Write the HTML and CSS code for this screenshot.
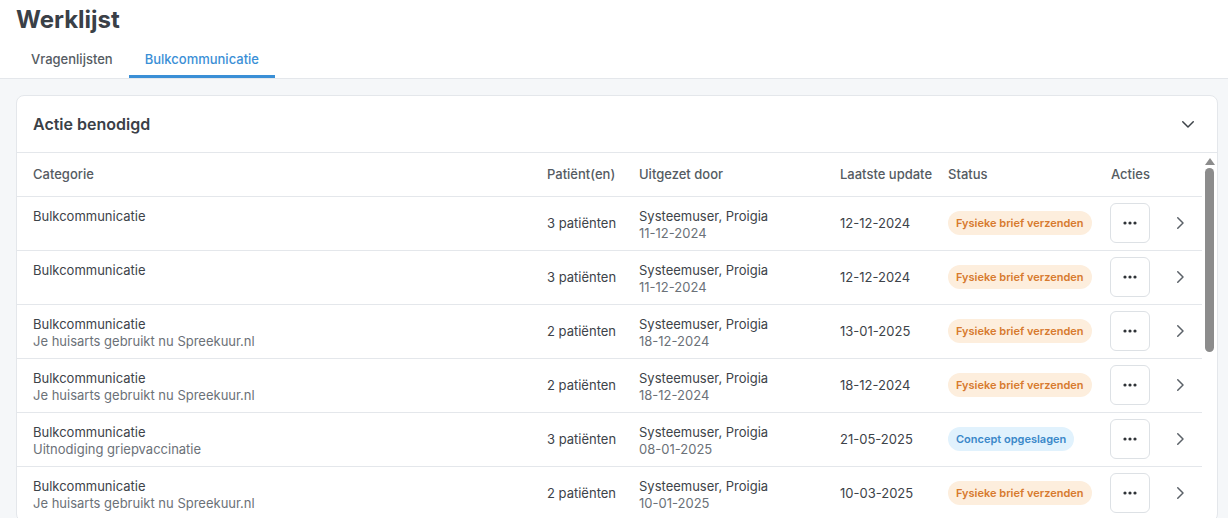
FILE: index.html
```html
<!DOCTYPE html>
<html>
<head>
  <meta charset="UTF-8">
  <title>Werklijst</title>
  <link rel="stylesheet" href="styles.css">
</head>
<body>
  <header class="page-head">
    <h1>Werklijst</h1>
    <nav class="tabs">
      <a class="tab">Vragenlijsten</a>
      <a class="tab active">Bulkcommunicatie</a>
    </nav>
  </header>

  <main class="content">
    <section class="card">
      <div class="card-head">
        <h2>Actie benodigd</h2>
        <svg class="toggle" width="18" height="18" viewBox="0 0 24 24" fill="none" stroke="#3d4349" stroke-width="2" stroke-linecap="round" stroke-linejoin="round"><path d="M5 9l7 7 7-7"/></svg>
      </div>
      <div class="card-body">
        <table class="list">
          <colgroup>
            <col style="width:514px"><col style="width:92px"><col style="width:201px"><col style="width:108px"><col style="width:163px"><col style="width:65px"><col style="width:42px">
          </colgroup>
          <thead>
            <tr><th>Categorie</th><th>Patiënt(en)</th><th>Uitgezet door</th><th>Laatste update</th><th>Status</th><th>Acties</th><th></th></tr>
          </thead>
          <tbody id="rows"></tbody>
        </table>
        <div class="scrollbar">
          <span class="arrow"></span>
          <span class="thumb"></span>
        </div>
      </div>
    </section>
  </main>

  <script>
    const rows = [
      ['', '3 patiënten', '11-12-2024', '12-12-2024', 'orange'],
      ['', '3 patiënten', '11-12-2024', '12-12-2024', 'orange'],
      ['Je huisarts gebruikt nu Spreekuur.nl', '2 patiënten', '18-12-2024', '13-01-2025', 'orange'],
      ['Je huisarts gebruikt nu Spreekuur.nl', '2 patiënten', '18-12-2024', '18-12-2024', 'orange'],
      ['Uitnodiging griepvaccinatie', '3 patiënten', '08-01-2025', '21-05-2025', 'blue'],
      ['Je huisarts gebruikt nu Spreekuur.nl', '2 patiënten', '10-01-2025', '10-03-2025', 'orange']
    ];
    const dots = '<svg width="14" height="4" viewBox="0 0 14 4"><circle cx="2" cy="2" r="1.6" fill="#2f3337"/><circle cx="7" cy="2" r="1.6" fill="#2f3337"/><circle cx="12" cy="2" r="1.6" fill="#2f3337"/></svg>';
    const chevron = '<svg width="18" height="18" viewBox="0 0 24 24" fill="none" stroke="#5b6168" stroke-width="2" stroke-linecap="round" stroke-linejoin="round"><path d="M9 5l7 7-7 7"/></svg>';
    document.getElementById('rows').innerHTML = rows.map(r => `
      <tr>
        <td class="stack"><div class="main">Bulkcommunicatie</div><div class="sub">${r[0]}</div></td>
        <td>${r[1]}</td>
        <td class="stack"><div class="main">Systeemuser, Proigia</div><div class="sub">${r[2]}</div></td>
        <td>${r[3]}</td>
        <td><span class="badge ${r[4]}">${r[4] === 'blue' ? 'Concept opgeslagen' : 'Fysieke brief verzenden'}</span></td>
        <td><button class="more">${dots}</button></td>
        <td class="go">${chevron}</td>
      </tr>`).join('');
  </script>
</body>
</html>
```

FILE: styles.css
```css
* { box-sizing: border-box; }
html, body { height: 100%; }
body {
  margin: 0;
  font-family: Inter, "Noto Sans", sans-serif;
  color: #3d4349;
  background: #f5f7f9;
  overflow: hidden;
}
.page-head {
  background: #fff;
  border-bottom: 1px solid #e4e7eb;
  padding: 5px 0 0 16px;
}
.page-head h1 {
  margin: 0;
  font-size: 24px;
  font-weight: 700;
  line-height: 30px;
  color: #3a4047;
}
.tabs { display: flex; margin-top: 8px; margin-left: -1px; }
.tab {
  padding: 6px 16px 6px;
  font-size: 13px;
  font-weight: 500;
  line-height: 20px;
  color: #555b62;
  border-bottom: 3px solid transparent;
}
.tab.active { color: #3a8fd6; border-bottom-color: #3a8fd6; }

.content { padding: 16px 10px 0 16px; }
.card {
  background: #fff;
  border: 1px solid #e4e7eb;
  border-radius: 8px;
}
.card-head {
  display: flex;
  align-items: center;
  justify-content: space-between;
  height: 57px;
  padding: 0 20px 0 16px;
  border-bottom: 1px solid #e4e7eb;
}
.card-head h2 {
  margin: 0;
  font-size: 16px;
  font-weight: 600;
  color: #3a4047;
}
.card-body { display: flex; }
.list {
  border-collapse: collapse;
  table-layout: fixed;
  width: 1185px;
  font-size: 13px;
}
.list th {
  text-align: left;
  font-weight: 500;
  color: #555b62;
  height: 43px;
  padding: 0 0 0 16px;
  border-bottom: 1px solid #e4e7eb;
  white-space: nowrap;
}
.list td {
  height: 54px;
  padding: 0 0 0 16px;
  border-bottom: 1px solid #e4e7eb;
  vertical-align: middle;
  line-height: 17px;
  white-space: nowrap;
}
.list td.stack { padding-top: 3px; }
.list .sub { color: #6b7178; min-height: 17px; }
.badge {
  display: inline-block;
  padding: 4px 8px;
  border-radius: 12px;
  font-size: 11px;
  font-weight: 600;
  line-height: 16px;
}
.badge.orange { background: #fdeedd; color: #d77a2e; }
.badge.blue { background: #e1f2fd; color: #3a88c9; }
.more {
  width: 40px;
  height: 40px;
  margin-left: -1px;
  display: flex;
  align-items: center;
  justify-content: center;
  background: #fff;
  border: 1px solid #dde1e5;
  border-radius: 6px;
  padding: 0;
}
.list td.go { padding-left: 11px; }
.list td.go svg { display: block; }
.scrollbar {
  width: 15px;
  display: flex;
  flex-direction: column;
  align-items: center;
  padding-top: 5px;
}
.arrow {
  width: 0;
  height: 0;
  border-left: 5px solid transparent;
  border-right: 5px solid transparent;
  border-bottom: 7px solid #8c8c8c;
}
.thumb {
  width: 9px;
  height: 184px;
  margin-top: 3px;
  border-radius: 5px;
  background: #8c8c8c;
}
```
